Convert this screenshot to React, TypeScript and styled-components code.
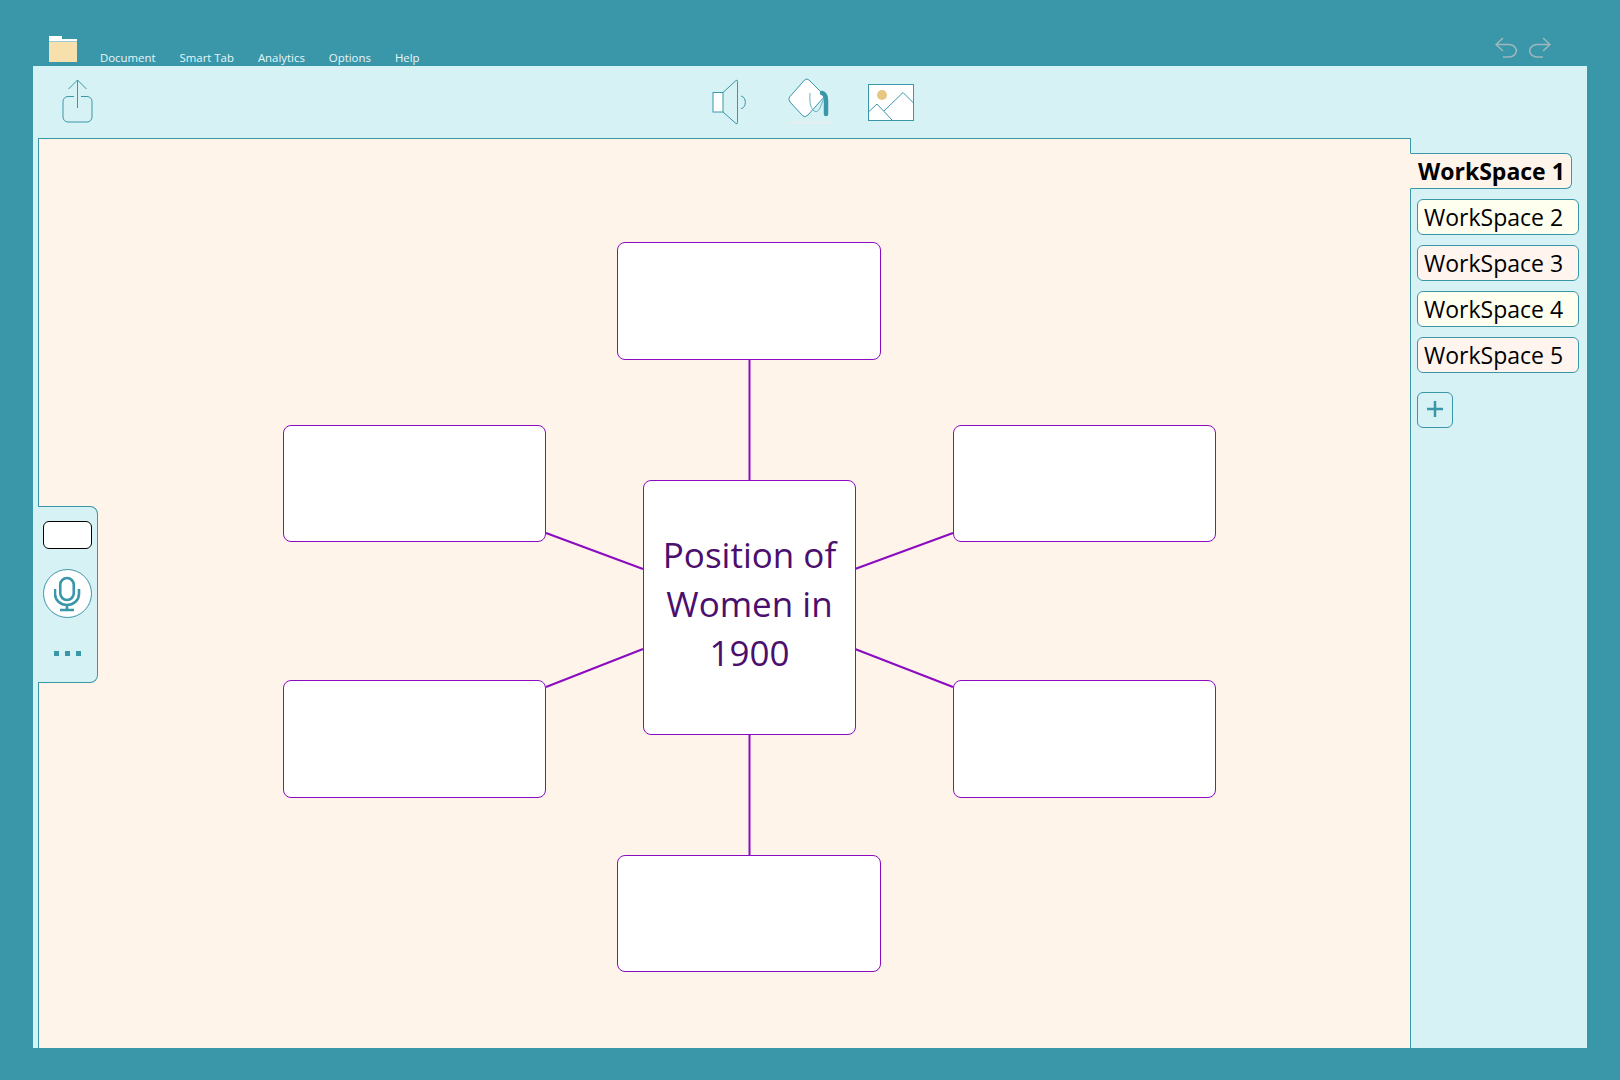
import React from 'react'
import styled, { createGlobalStyle } from 'styled-components'

const TEAL = '#3a96a9'
const PANEL = '#d7f2f5'
const PAPER = '#fff4ea'
const PURPLE = '#8a0bc0'
const FONT = '"Open Sans", "Noto Sans", "Liberation Sans", sans-serif'

const GlobalStyle = createGlobalStyle`
  html, body {
    margin: 0;
    padding: 0;
    background: ${TEAL};
    font-family: ${FONT};
  }
`

const Page = styled.div`
  width: 1620px;
  height: 1080px;
  box-sizing: border-box;
  padding: 0 33px 32px;
  display: flex;
  flex-direction: column;
  background: ${TEAL};
  overflow: hidden;
`

const Header = styled.header`
  height: 66px;
  flex: none;
  display: flex;
  align-items: flex-end;
`

const Folder = styled.div`
  width: 28px;
  height: 26px;
  margin: 0 0 4px 16px;
  flex: none;
`

const Menu = styled.nav`
  display: flex;
  gap: 24px;
  margin-left: 23px;
`

const MenuItem = styled.span`
  font-size: 11.4px;
  line-height: 16px;
  color: #e6f7fa;
`

const History = styled.div`
  margin: 0 36px 8px auto;
  display: flex;
  gap: 12px;
`

const Frame = styled.main`
  flex: 1;
  display: flex;
  flex-direction: column;
  min-height: 0;
  background: ${PANEL};
`

const Toolbar = styled.div`
  height: 72px;
  flex: none;
  display: flex;
  align-items: flex-start;
  padding-left: 29px;
`

const Share = styled.svg`
  margin-top: 13px;
  flex: none;
`

const ToolGroup = styled.div`
  display: flex;
  align-items: flex-start;
  gap: 36px;
  margin-left: 618px;
`

const ToolIcon = styled.svg<{ $top: number }>`
  margin-top: ${({ $top }) => $top}px;
  flex: none;
`

const Workarea = styled.div`
  flex: 1;
  display: flex;
  min-height: 0;
  padding-left: 5px;
`

const Canvas = styled.section`
  position: relative;
  width: 1373px;
  flex: none;
  box-sizing: border-box;
  background: ${PAPER};
  border: 1px solid ${TEAL};
  border-bottom: 0;
`

const Links = styled.svg`
  position: absolute;
  inset: 0;
`

const Node = styled.div<{ $x: number; $y: number; $w: number; $h: number }>`
  position: absolute;
  left: ${({ $x }) => $x}px;
  top: ${({ $y }) => $y}px;
  width: ${({ $w }) => $w}px;
  height: ${({ $h }) => $h}px;
  box-sizing: border-box;
  background: #fff;
  border: 1px solid ${PURPLE};
  border-radius: 8px;
`

const CenterText = styled.div`
  padding-top: 49px;
  text-align: center;
  font-size: 35px;
  line-height: 49px;
  color: #4b0f6e;
`

const SideTool = styled.aside`
  position: absolute;
  left: -1px;
  top: 367px;
  width: 60px;
  height: 177px;
  box-sizing: border-box;
  display: flex;
  flex-direction: column;
  align-items: center;
  background: ${PANEL};
  border: 1px solid ${TEAL};
  border-left: 0;
  border-radius: 0 8px 8px 0;
  padding-top: 14px;
`

const ColorSwatch = styled.div`
  width: 49px;
  height: 28px;
  box-sizing: border-box;
  background: #fff;
  border: 1px solid #000;
  border-radius: 6px;
`

const MicButton = styled.div`
  width: 49px;
  height: 49px;
  margin-top: 20px;
  box-sizing: border-box;
  display: flex;
  align-items: center;
  justify-content: center;
  background: #fff;
  border: 1px solid ${TEAL};
  border-radius: 50%;
`

const Dots = styled.div`
  display: flex;
  gap: 6px;
  margin-top: 33px;
`

const Dot = styled.span`
  width: 5px;
  height: 5px;
  background: ${TEAL};
`

const Tabs = styled.div`
  flex: 1;
  display: flex;
  flex-direction: column;
  align-items: flex-start;
  padding-top: 15px;
`

const Tab = styled.div<{ $bg: string; $active?: boolean }>`
  position: relative;
  z-index: ${({ $active }) => ($active ? 1 : 0)};
  box-sizing: border-box;
  height: 36px;
  width: 162px;
  margin-left: ${({ $active }) => ($active ? -1 : 6)}px;
  margin-bottom: 10px;
  padding-left: ${({ $active }) => ($active ? 7 : 6)}px;
  background: ${({ $bg }) => $bg};
  border: 1px solid ${TEAL};
  border-left-color: ${({ $active }) => ($active ? PAPER : TEAL)};
  border-radius: ${({ $active }) => ($active ? '0 6px 6px 0' : '6px')};
  font-size: 23px;
  font-weight: ${({ $active }) => ($active ? 700 : 400)};
  line-height: 34px;
  white-space: nowrap;
  color: #000;
`

const AddTab = styled.div`
  width: 36px;
  height: 36px;
  margin: 9px 0 0 6px;
  padding-bottom: 3px;
  box-sizing: border-box;
  display: flex;
  align-items: center;
  justify-content: center;
  border: 1px solid ${TEAL};
  border-radius: 6px;
`

const NODES = [
  { id: 'top', x: 578, y: 103, w: 264, h: 118 },
  { id: 'left-up', x: 244, y: 286, w: 263, h: 117 },
  { id: 'right-up', x: 914, y: 286, w: 263, h: 117 },
  { id: 'left-down', x: 244, y: 541, w: 263, h: 118 },
  { id: 'right-down', x: 914, y: 541, w: 263, h: 118 },
  { id: 'bottom', x: 578, y: 716, w: 264, h: 117 },
]

const LINKS = [
  [710.5, 221, 710.5, 341],
  [710.5, 596, 710.5, 716],
  [507, 394, 604, 430],
  [507, 548, 604, 510],
  [816, 430, 914, 394],
  [816, 510, 914, 548],
]

const WORKSPACES = [
  { name: 'WorkSpace 2', bg: '#fffff0' },
  { name: 'WorkSpace 3', bg: '#fff4ee' },
  { name: 'WorkSpace 4', bg: '#fffff0' },
  { name: 'WorkSpace 5', bg: '#fff4ee' },
]

export default function App() {
  return (
    <Page>
      <GlobalStyle />
      <Header>
        <Folder>
          <svg width="28" height="26" viewBox="0 0 28 26">
            <path d="M0 0h13v3h15v2.5H0z" fill="#fff" />
            <rect y="6" width="28" height="20" fill="#f8e0ac" />
          </svg>
        </Folder>
        <Menu>
          {['Document', 'Smart Tab', 'Analytics', 'Options', 'Help'].map((item) => (
            <MenuItem key={item}>{item}</MenuItem>
          ))}
        </Menu>
        <History>
          <svg width="22" height="21" viewBox="0 0 22 21" fill="none" stroke="#9fb8bd" strokeWidth="1.5">
            <path d="M8 1L1 7.5l7 6.5M1 7.5h13a7 6 0 0 1 0 12.5H8" />
          </svg>
          <svg width="22" height="21" viewBox="0 0 22 21" fill="none" stroke="#9fb8bd" strokeWidth="1.5">
            <path d="M14 1l7 6.5-7 6.5M21 7.5H8a7 6 0 0 0 0 12.5h6" />
          </svg>
        </History>
      </Header>
      <Frame>
        <Toolbar>
          <Share width="32" height="44" viewBox="0 0 32 44" fill="none" stroke={TEAL}>
            <path d="M6.5 10L15.5 1l9 9M15.5 1v28" />
            <path d="M12 17.5H6a5 5 0 0 0-5 5V38a5 5 0 0 0 5 5h19a5 5 0 0 0 5-5V22.5a5 5 0 0 0-5-5H19" />
          </Share>
          <ToolGroup>
            <ToolIcon $top={12} width="39" height="48" viewBox="0 0 39 48" fill="none" stroke={TEAL}>
              <rect x="1" y="14.5" width="10" height="19.5" fill="#fff" />
              <path d="M11 14.5L24 2.5q1.5-1 1.5 1V44.5q0 2-1.5 1L11 34" />
              <path d="M29 18a5.5 6.5 0 0 1 0 12.7" />
            </ToolIcon>
            <ToolIcon $top={12} width="45" height="46" viewBox="0 0 45 46">
              <path
                d="M17.5 2Q20 0 22 2L38 18 21 37Q18 40 15.5 37.5L3 24Q.5 21 3 18.5z"
                fill="#fff"
                stroke={TEAL}
              />
              <path d="M35 15Q39 16 39 23V36" fill="none" stroke={TEAL} strokeWidth="4.5" strokeLinecap="round" />
              <path d="M23 15Q22 28 26 32 30 36 33 30L37 20" fill="none" stroke="#62b2c2" strokeWidth="1" />
              <path d="M1 44.5h44" stroke="#e8eeee" strokeWidth="2" />
            </ToolIcon>
            <ToolIcon $top={18} width="46" height="37" viewBox="0 0 46 37" fill="none" stroke={TEAL}>
              <rect x="0.5" y="0.5" width="45" height="36" fill="#fff" />
              <circle cx="14" cy="11" r="5" fill="#e8c681" stroke="none" />
              <path d="M0.5 28L9 20l15.5 16.5M16 27L35 8.5 45.5 19" />
            </ToolIcon>
          </ToolGroup>
        </Toolbar>
        <Workarea>
          <Canvas>
            <Links width="1371" height="909" viewBox="0 0 1371 909">
              {LINKS.map(([x1, y1, x2, y2]) => (
                <line key={`${x1}-${y1}`} x1={x1} y1={y1} x2={x2} y2={y2} stroke={PURPLE} strokeWidth="2" />
              ))}
            </Links>
            {NODES.map((node) => (
              <Node key={node.id} $x={node.x} $y={node.y} $w={node.w} $h={node.h} />
            ))}
            <Node $x={604} $y={341} $w={213} $h={255}>
              <CenterText>
                Position of
                <br />
                Women in
                <br />
                1900
              </CenterText>
            </Node>
            <SideTool>
              <ColorSwatch />
              <MicButton>
                <svg width="28" height="36" viewBox="1 0 28 36" fill="none" stroke={TEAL} strokeWidth="2.6">
                  <rect x="7.25" y="2" width="13.5" height="22" rx="6.75" />
                  <path d="M2 13v5a12 11 0 0 0 24 0v-5M14 29.5v4.5M7 34h14" />
                </svg>
              </MicButton>
              <Dots>
                <Dot />
                <Dot />
                <Dot />
              </Dots>
            </SideTool>
          </Canvas>
          <Tabs>
            <Tab $bg={PAPER} $active>
              WorkSpace 1
            </Tab>
            {WORKSPACES.map((ws) => (
              <Tab key={ws.name} $bg={ws.bg}>
                {ws.name}
              </Tab>
            ))}
            <AddTab>
              <svg width="18" height="18" viewBox="0 0 18 18" stroke={TEAL} strokeWidth="2.5">
                <path d="M9 1v16M1 9h16" />
              </svg>
            </AddTab>
          </Tabs>
        </Workarea>
      </Frame>
    </Page>
  )
}
